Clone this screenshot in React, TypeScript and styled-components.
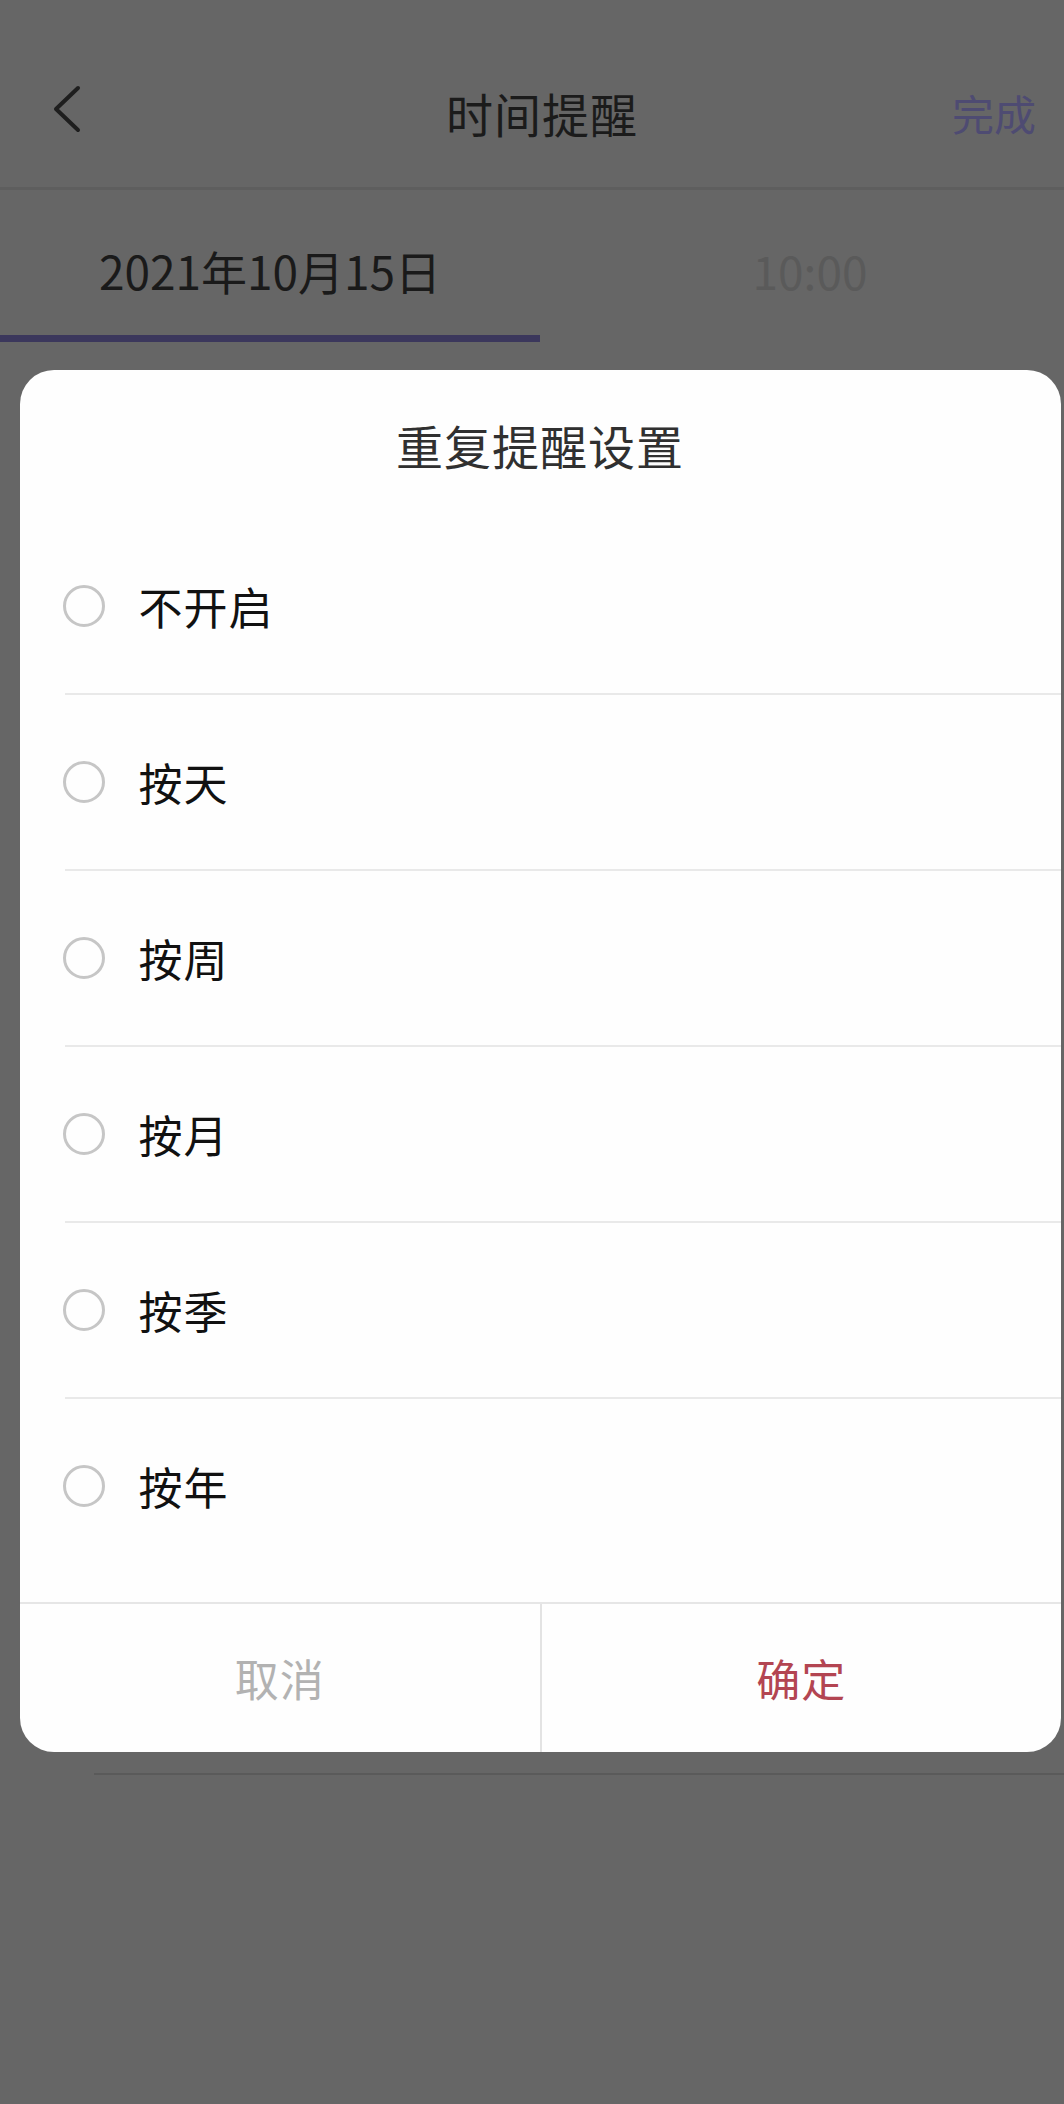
import React from "react";
import styled, { createGlobalStyle } from "styled-components";

const GlobalStyle = createGlobalStyle`
  html, body {
    margin: 0;
    padding: 0;
    background: #666666;
    overflow: hidden;
  }
  * { box-sizing: border-box; }
`;

const FONT = `"Noto Sans CJK SC", "Noto Sans", "Liberation Sans", sans-serif`;

const Screen = styled.div`
  position: relative;
  width: 1080px;
  min-height: 2104px;
  background: #666666;
  font-family: ${FONT};
  overflow: hidden;
`;

const StatusBar = styled.div`
  height: 38px;
`;

const NavBar = styled.header`
  display: grid;
  grid-template-columns: 1fr auto 1fr;
  align-items: center;
  height: 152px;
  padding: 0 44px 0 48px;
  border-bottom: 3px solid #5e5e5e;
`;

const BackButton = styled.button`
  justify-self: start;
  display: flex;
  align-items: center;
  padding: 0;
  margin-bottom: 8px;
  border: none;
  background: none;
  color: #1e1e1e;
`;

const NavTitle = styled.h1`
  margin: 0;
  font-size: 47px;
  font-weight: 400;
  color: #1b1b1b;
  letter-spacing: 1px;
`;

const NavAction = styled.button`
  justify-self: end;
  padding: 0;
  border: none;
  background: none;
  font-family: ${FONT};
  font-size: 42px;
  color: #4e4b72;
`;

const Tabs = styled.nav`
  display: flex;
  height: 152px;
`;

const Tab = styled.div<{ $active?: boolean }>`
  flex: 1;
  display: flex;
  align-items: center;
  justify-content: center;
  padding-top: 14px;
  border-bottom: 7px solid ${(p) => (p.$active ? "#3b375c" : "transparent")};
  font-size: 46px;
  color: ${(p) => (p.$active ? "#1a1a1a" : "#5a5a5a")};
`;

const BgList = styled.div`
  padding-left: 94px;
`;

const BgRow = styled.div<{ $h: number }>`
  height: ${(p) => p.$h}px;
  border-bottom: 2px solid #5a5a5a;
`;

const Overlay = styled.div`
  position: absolute;
  inset: 0;
  display: flex;
  justify-content: center;
  align-items: flex-start;
  padding-top: 370px;
`;

const Dialog = styled.div`
  width: 1041px;
  background: #fefefe;
  border-radius: 34px;
  overflow: hidden;
`;

const DialogTitle = styled.h2`
  display: flex;
  align-items: center;
  justify-content: center;
  height: 149px;
  margin: 0;
  font-size: 47px;
  font-weight: 400;
  color: #303030;
  letter-spacing: 1px;
`;

const OptionList = styled.ul`
  list-style: none;
  margin: 0;
  padding: 0 0 27px;
`;

const OptionRow = styled.li<{ $last?: boolean }>`
  display: flex;
  align-items: center;
  height: 176px;
  margin-left: 45px;
  border-bottom: 2px solid ${(p) => (p.$last ? "transparent" : "#e9e9e9")};
`;

const Radio = styled.span`
  flex: none;
  width: 42px;
  height: 42px;
  margin-left: -2px;
  border: 3px solid #c6c6c6;
  border-radius: 50%;
`;

const OptionLabel = styled.span`
  margin-left: 34px;
  font-size: 44px;
  color: #111111;
  letter-spacing: 1px;
`;

const ButtonBar = styled.div`
  display: grid;
  grid-template-columns: 1fr 1fr;
  height: 150px;
  border-top: 2px solid #e6e6e6;
`;

const DialogButton = styled.button<{ $primary?: boolean }>`
  display: flex;
  align-items: center;
  justify-content: center;
  padding: 0;
  border: none;
  border-left: ${(p) => (p.$primary ? "2px solid #e3e3e3" : "none")};
  background: transparent;
  font-family: ${FONT};
  font-size: 44px;
  letter-spacing: 1px;
  color: ${(p) => (p.$primary ? "#b34552" : "#b2b2b2")};
`;

const options = ["不开启", "按天", "按周", "按月", "按季", "按年"];

export default function App() {
  return (
    <Screen>
      <GlobalStyle />
      <StatusBar />
      <NavBar>
        <BackButton aria-label="返回">
          <svg width="40" height="56" viewBox="0 0 40 56" fill="none">
            <path
              d="M30 7 L8 28 L30 49"
              stroke="currentColor"
              strokeWidth="4"
              strokeLinecap="round"
              strokeLinejoin="round"
            />
          </svg>
        </BackButton>
        <NavTitle>时间提醒</NavTitle>
        <NavAction>完成</NavAction>
      </NavBar>
      <Tabs>
        <Tab $active>2021年10月15日</Tab>
        <Tab>10:00</Tab>
      </Tabs>
      <BgList>
        <BgRow $h={1433} />
      </BgList>

      <Overlay>
        <Dialog>
          <DialogTitle>重复提醒设置</DialogTitle>
          <OptionList>
            {options.map((o, i) => (
              <OptionRow key={o} $last={i === options.length - 1}>
                <Radio />
                <OptionLabel>{o}</OptionLabel>
              </OptionRow>
            ))}
          </OptionList>
          <ButtonBar>
            <DialogButton>取消</DialogButton>
            <DialogButton $primary>确定</DialogButton>
          </ButtonBar>
        </Dialog>
      </Overlay>
    </Screen>
  );
}
